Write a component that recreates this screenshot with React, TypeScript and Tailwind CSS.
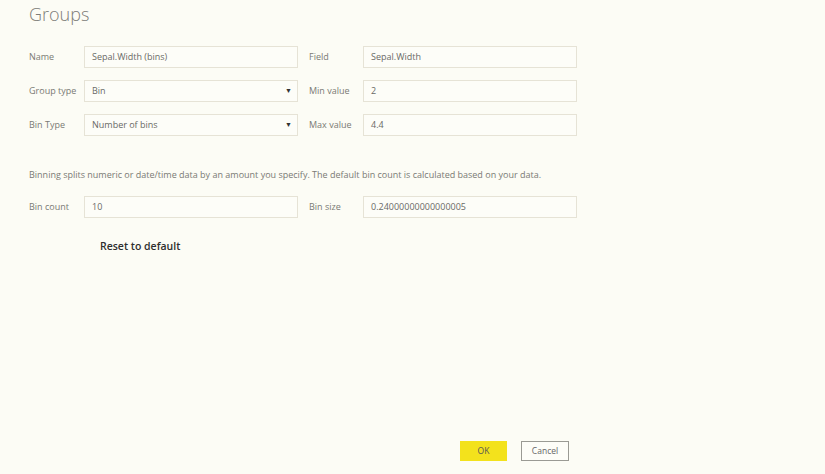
import React from 'react';

function Field({ value, select, w = 'w-[214px]' }: { value: string; select?: boolean; w?: string }) {
  return (
    <div className={`${w} h-[22px] border border-[#e6e3d6] bg-[#fdfdf8] flex items-center justify-between pl-[7px] pr-[5px] text-[9px] text-[#6a6a66]`}>
      <span>{value}</span>
      {select && <span className="text-[7px] text-[#333]">▼</span>}
    </div>
  );
}

function Label({ children, w = 'w-[55px]' }: { children: React.ReactNode; w?: string }) {
  return <div className={`${w} text-[9px] text-[#7a7a74]`}>{children}</div>;
}

export default function App() {
  return (
    <div
      className="w-[825px] h-[474px] bg-[#fcfcf5] relative overflow-hidden"
      style={{ fontFamily: '"Open Sans", "Noto Sans", sans-serif' }}
    >
      <div className="pl-[29px] pt-[1px]">
        <h1 className="text-[18px] font-light text-[#7d7d78] leading-[26px]">Groups</h1>

        <div className="mt-[19px] flex flex-col gap-[12px]">
          <div className="flex items-center">
            <Label>Name</Label>
            <Field value="Sepal.Width (bins)" />
            <div className="w-[11px]" />
            <Label w="w-[54px]">Field</Label>
            <Field value="Sepal.Width" />
          </div>
          <div className="flex items-center">
            <Label>Group type</Label>
            <Field value="Bin" select />
            <div className="w-[11px]" />
            <Label w="w-[54px]">Min value</Label>
            <Field value="2" />
          </div>
          <div className="flex items-center">
            <Label>Bin Type</Label>
            <Field value="Number of bins" select />
            <div className="w-[11px]" />
            <Label w="w-[54px]">Max value</Label>
            <Field value="4.4" />
          </div>
        </div>

        <p className="mt-[33px] text-[9px] text-[#7a7a74] leading-[12px]">
          Binning splits numeric or date/time data by an amount you specify. The default bin count is calculated based on your data.
        </p>

        <div className="mt-[15px] flex items-center">
          <Label>Bin count</Label>
          <Field value="10" />
          <div className="w-[11px]" />
          <Label w="w-[54px]">Bin size</Label>
          <Field value="0.24000000000000005" />
        </div>

        <div className="mt-[21px] ml-[71px] text-[10.5px] font-semibold text-[#2e2e2e]">Reset to default</div>
      </div>

      <div className="absolute left-[460px] top-[441px] flex gap-[14px]">
        <div className="w-[47px] h-[20px] bg-[#f3e21c] flex items-center justify-center text-[8.5px] text-[#555]">OK</div>
        <div className="w-[48px] h-[20px] border border-[#9a9a94] bg-[#fdfdf8] flex items-center justify-center text-[8.5px] text-[#666]">Cancel</div>
      </div>
    </div>
  );
}
